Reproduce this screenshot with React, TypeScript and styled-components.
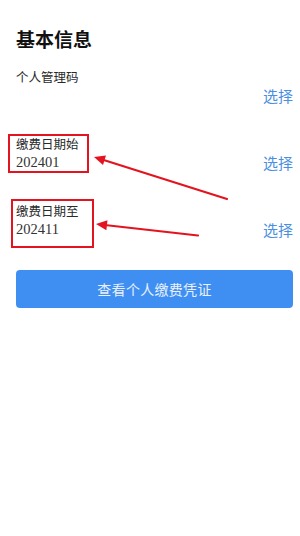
import styled, { createGlobalStyle } from 'styled-components';

const GlobalStyle = createGlobalStyle`
  html, body {
    margin: 0;
    padding: 0;
    background: #ffffff;
  }
  body {
    font-family: "Noto Sans CJK SC", "Noto Sans", sans-serif;
  }
`;

const Page = styled.div`
  position: relative;
  width: 300px;
  height: 536px;
  background: #ffffff;
  padding: 26px 7px 0 16px;
  box-sizing: border-box;
  overflow: hidden;
`;

const Title = styled.h1`
  margin: 0 0 16px;
  font-size: 19px;
  line-height: 26px;
  font-weight: 700;
  color: #111111;
`;

const Form = styled.div`
  display: flex;
  flex-direction: column;
  gap: 31px;
`;

const Row = styled.div`
  display: flex;
  justify-content: space-between;
  align-items: flex-end;
`;

const Field = styled.div`
  position: relative;
  display: flex;
  flex-direction: column;
`;

const Label = styled.div`
  font-size: 12.5px;
  line-height: 18px;
  color: #2a2a2a;
`;

const Value = styled.div`
  font-family: "Liberation Serif", "Noto Sans CJK SC", serif;
  font-size: 14.5px;
  line-height: 18px;
  height: 18px;
  color: #333333;
`;

const Marker = styled.div<{ $left: number; $top: number; $w: number; $h: number }>`
  position: absolute;
  left: ${p => p.$left}px;
  top: ${p => p.$top}px;
  width: ${p => p.$w}px;
  height: ${p => p.$h}px;
  border: 2px solid #e3141f;
  box-sizing: border-box;
  pointer-events: none;
`;

const Pick = styled.a`
  font-size: 15px;
  line-height: 20px;
  color: #4a8fe0;
  text-decoration: none;
  margin-bottom: -2px;
`;

const Button = styled.button`
  margin-top: 32px;
  width: 277px;
  height: 38px;
  border: none;
  border-radius: 4px;
  background: #3f8ef2;
  color: #e8f1fd;
  font-family: "Noto Sans CJK SC", sans-serif;
  font-size: 14px;
  letter-spacing: 0.3px;
`;

const Arrows = styled.svg`
  position: absolute;
  left: 0;
  top: 0;
  pointer-events: none;
`;

type Item = {
  label: string;
  value: string;
  marker?: { left: number; top: number; w: number; h: number };
};

const items: Item[] = [
  { label: '个人管理码', value: '' },
  { label: '缴费日期始', value: '202401', marker: { left: -8, top: -1, w: 81, h: 39 } },
  { label: '缴费日期至', value: '202411', marker: { left: -5, top: -3, w: 83, h: 49 } },
];

const Arrow = ({ x1, y1, x2, y2 }: { x1: number; y1: number; x2: number; y2: number }) => {
  const a = Math.atan2(y2 - y1, x2 - x1);
  const len = 11;
  const half = 5;
  const bx = x2 - Math.cos(a) * len;
  const by = y2 - Math.sin(a) * len;
  const px = -Math.sin(a) * half;
  const py = Math.cos(a) * half;
  return (
    <g>
      <line x1={x1} y1={y1} x2={bx} y2={by} stroke="#e3141f" strokeWidth={2.2} strokeLinecap="round" />
      <polygon points={`${x2},${y2} ${bx + px},${by + py} ${bx - px},${by - py}`} fill="#e3141f" />
    </g>
  );
};

const App = () => {
  return (
    <>
      <GlobalStyle />
      <Page>
        <Title>基本信息</Title>
        <Form>
          {items.map(it => (
            <Row key={it.label}>
              <Field>
                <Label>{it.label}</Label>
                <Value>{it.value}</Value>
                {it.marker && (
                  <Marker $left={it.marker.left} $top={it.marker.top} $w={it.marker.w} $h={it.marker.h} />
                )}
              </Field>
              <Pick href="#">选择</Pick>
            </Row>
          ))}
        </Form>
        <Button>查看个人缴费凭证</Button>
        <Arrows width="300" height="536" viewBox="0 0 300 536">
          <Arrow x1={227} y1={199} x2={94} y2={157} />
          <Arrow x1={198} y1={235.5} x2={96} y2={224} />
        </Arrows>
      </Page>
    </>
  );
};

export default App;
